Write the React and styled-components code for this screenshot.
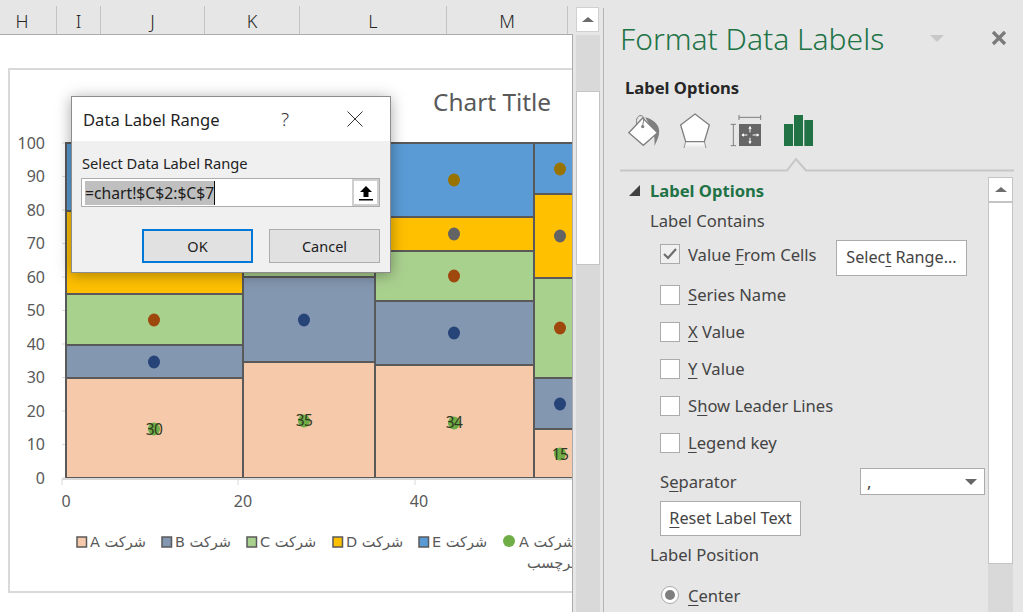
import React from "react";
import styled, { createGlobalStyle } from "styled-components";

const UI = `"Noto Sans", "Open Sans", "Liberation Sans", sans-serif`;
const ARABIC = `"DejaVu Sans", "Noto Sans", sans-serif`;

const Global = createGlobalStyle`
  html, body { margin: 0; padding: 0; background: #e6e6e6; }
  * { box-sizing: border-box; }
  u { text-decoration-thickness: 1px; text-underline-offset: 3px; }
`;

const Page = styled.div`
  display: flex;
  width: 1023px;
  height: 612px;
  overflow: hidden;
  position: relative;
  background: #e6e6e6;
  font-family: ${UI};
`;

const SheetArea = styled.div`
  width: 573px;
  flex: none;
  display: flex;
  flex-direction: column;
`;

const ColumnHeaders = styled.div`
  height: 35px;
  flex: none;
  display: flex;
  background: #e6e6e6;
  border-bottom: 1px solid #ababab;
  padding-top: 6px;
`;

const ColumnHeader = styled.div`
  width: ${(p) => p.$w}px;
  flex: none;
  display: flex;
  justify-content: center;
  align-items: center;
  font-size: 18px;
  font-weight: 300;
  padding-top: 2px;
  padding-right: ${(p) => p.$pr || 0}px;
  color: #262626;
  border-right: ${(p) => (p.$last ? "none" : "1px solid #c4c4c4")};
`;

const Sheet = styled.div`
  flex: 1;
  background: #fff;
  border-right: 1px solid #ababab;
  overflow: hidden;
  padding: 33px 0 0 8px;
`;

const ChartFrame = styled.div`
  width: 640px;
  height: 525px;
  border: 2px solid #d9d9d9;
  background: #fff;
  overflow: hidden;
`;

const ChartSvg = styled.svg`
  display: block;
`;

const AxisText = styled.text`
  font-family: ${UI};
  font-size: 16px;
  fill: #595959;
`;

const TitleText = styled.text`
  font-family: ${UI};
  font-size: 24.4px;
  fill: #595959;
`;

const DataText = styled.text`
  font-family: ${UI};
  font-size: 15.5px;
  fill: #2f3a20;
  letter-spacing: -0.5px;
`;

const LegendText = styled.text`
  font-family: ${ARABIC};
  font-size: 14.5px;
  fill: #595959;
`;

const Dialog = styled.div`
  position: absolute;
  left: 71px;
  top: 96px;
  width: 320px;
  height: 177px;
  display: flex;
  flex-direction: column;
  background: #f0f0f0;
  border: 1px solid #8c8c8c;
  box-shadow: 0 2px 14px rgba(0, 0, 0, 0.35);
`;

const DialogTitleBar = styled.div`
  height: 44px;
  flex: none;
  display: flex;
  align-items: center;
  background: #fff;
  padding-left: 11px;
  font-size: 16.6px;
  color: #1f1f1f;
`;

const DialogTitle = styled.div`
  width: 191px;
`;

const HelpMark = styled.div`
  width: 22px;
  text-align: center;
  font-size: 19px;
  font-weight: 300;
  color: #333;
`;

const DialogClose = styled.svg`
  margin-left: 51px;
`;

const DialogBody = styled.div`
  flex: 1;
  display: flex;
  flex-direction: column;
  padding: 11px 10px 0 9px;
`;

const DialogLabel = styled.div`
  height: 22px;
  line-height: 22px;
  font-size: 14.7px;
  color: #222;
  margin-left: 1px;
`;

const RangeInput = styled.div`
  height: 29px;
  margin-top: 4px;
  display: flex;
  align-items: center;
  background: #fff;
  border: 1px solid #acacac;
  padding-left: 3px;
  font-size: 15.7px;
  color: #1c1c1c;
`;

const SelectedText = styled.span`
  background: #bfbfbf;
  border-right: 1px solid #111;
  line-height: 24px;
  height: 24px;
`;

const RefButton = styled.div`
  margin-left: auto;
  width: 27px;
  height: 27px;
  background: #fff;
  border: 2px solid #cfcfcf;
  display: flex;
  align-items: center;
  justify-content: center;
`;

const DialogActions = styled.div`
  display: flex;
  justify-content: flex-end;
  gap: 16px;
  margin-top: 22px;
`;

const DialogButton = styled.div`
  width: 111px;
  height: 34px;
  display: flex;
  align-items: center;
  justify-content: center;
  background: #e1e1e1;
  border: ${(p) => (p.$primary ? "2px solid #0078d7" : "1px solid #adadad")};
  font-size: 14.5px;
  color: #1c1c1c;
`;

const VScroll = styled.div`
  width: 27px;
  flex: none;
  display: flex;
  flex-direction: column;
  padding: 7px 0 0 3px;
`;

const ScrollButton = styled.div`
  width: 23px;
  height: 25px;
  flex: none;
  background: #fff;
  border: 1px solid #d0d0d0;
  display: flex;
  align-items: center;
  justify-content: center;
`;

const ScrollTrack = styled.div`
  flex: 1;
  background: #d9d9d9;
  padding-top: ${(p) => p.$pad}px;
  margin-top: ${(p) => p.$gap}px;
`;

const ScrollThumb = styled.div`
  height: ${(p) => p.$h}px;
  background: #fff;
  border: 1px solid #c4c4c4;
`;

const Panel = styled.div`
  margin-left: 3px;
  margin-top: 8px;
  flex: 1;
  display: flex;
  flex-direction: column;
  border-left: 1px solid #b4b4b4;
  min-width: 0;
`;

const PanelHeader = styled.div`
  height: 62px;
  flex: none;
  display: flex;
  align-items: center;
  padding: 0 0 2px 16px;
`;

const PanelTitle = styled.div`
  width: 310px;
  font-size: 30px;
  font-weight: 300;
  color: #217346;
  white-space: nowrap;
`;

const PanelMenu = styled.div`
  width: 0;
  height: 0;
  border-left: 7px solid transparent;
  border-right: 7px solid transparent;
  border-top: 7px solid #c8c8c8;
`;

const PanelClose = styled.svg`
  margin-left: 47px;
`;

const TabCaption = styled.div`
  height: 24px;
  margin: 6px 0 0 21px;
  line-height: 24px;
  font-size: 16.6px;
  font-weight: 700;
  color: #262626;
`;

const TabIcons = styled.div`
  display: flex;
  align-items: center;
  height: 36px;
  margin: 12px 0 0 22px;
`;

const TabIcon = styled.svg`
  flex: none;
  margin-left: ${(p) => p.$ml || 0}px;
`;

const Divider = styled.svg`
  display: block;
  flex: none;
  margin: 9px 0 0 16px;
`;

const PanelBody = styled.div`
  flex: 1;
  display: flex;
  min-height: 0;
`;

const Options = styled.div`
  width: 384px;
  flex: none;
  display: flex;
  flex-direction: column;
  padding: 6px 3px 0 0;
  font-size: 16.6px;
  color: #444;
`;

const SectionHead = styled.div`
  height: 24px;
  flex: none;
  display: flex;
  align-items: center;
  padding-left: 25px;
  gap: 10px;
  font-size: 16.6px;
  font-weight: 700;
  color: #217346;
`;

const Caret = styled.div`
  width: 0;
  height: 0;
  border-left: 11px solid transparent;
  border-bottom: 11px solid #404040;
`;

const Caption = styled.div`
  height: 24px;
  line-height: 24px;
  margin-left: 46px;
  margin-top: ${(p) => p.$mt}px;
`;

const CheckRow = styled.div`
  display: flex;
  align-items: center;
  height: ${(p) => p.$h || 37}px;
  flex: none;
  margin-left: 56px;
  margin-top: ${(p) => p.$mt || 0}px;
  margin-bottom: ${(p) => p.$mb || 0}px;
  gap: 8px;
`;

const CheckBox = styled.div`
  width: 20px;
  height: 20px;
  flex: none;
  display: flex;
  align-items: center;
  justify-content: center;
  background: ${(p) => (p.$on ? "#f0f0f0" : "#fff")};
  border: 1px solid #ababab;
`;

const RadioBox = styled.div`
  width: 18px;
  height: 18px;
  margin: 0 1px;
  flex: none;
  border-radius: 50%;
  border: 1px solid #ababab;
  background: #fff;
  display: flex;
  align-items: center;
  justify-content: center;
  &::after {
    content: "";
    width: 10px;
    height: 10px;
    border-radius: 50%;
    background: #7f7f7f;
  }
`;

const FlatButton = styled.div`
  height: ${(p) => p.$h}px;
  width: ${(p) => p.$w}px;
  flex: none;
  display: flex;
  align-items: center;
  justify-content: center;
  background: #fff;
  border: 1px solid #ababab;
  color: #444;
  font-size: 16.2px;
  padding-bottom: 2px;
`;

const RangeButtonSlot = styled.div`
  margin-left: auto;
  margin-top: 8px;
  margin-right: 18px;
`;

const SeparatorRow = styled.div`
  display: flex;
  align-items: center;
  flex: none;
  height: 27px;
  margin: 7px 0 0 56px;
`;

const SelectBox = styled.div`
  margin-left: auto;
  width: 125px;
  height: 27px;
  display: flex;
  align-items: center;
  justify-content: space-between;
  background: #fff;
  border: 1px solid #ababab;
  padding: 0 7px 0 6px;
`;

const SelectCaret = styled.div`
  width: 0;
  height: 0;
  border-left: 6px solid transparent;
  border-right: 6px solid transparent;
  border-top: 6px solid #666;
`;

const ResetSlot = styled.div`
  margin: 6px 0 0 56px;
`;

const PanelScroll = styled.div`
  width: 25px;
  flex: none;
  display: flex;
  flex-direction: column;
  padding-top: 5px;
`;

const PanelScrollButton = styled.div`
  height: 25px;
  flex: none;
  background: #fff;
  border: 1px solid #c4c4c4;
  display: flex;
  align-items: center;
  justify-content: center;
`;

const PanelTrack = styled.div`
  flex: 1;
  background: #d9d9d9;
`;

const UpArrow = styled.div`
  width: 0;
  height: 0;
  border-left: 6px solid transparent;
  border-right: 6px solid transparent;
  border-bottom: 5px solid #6d6d6d;
`;

/* ---------- chart data, in page pixels ---------- */
const PAL = { A: "#f7c9ab", B: "#8497b0", C: "#a9d18e", D: "#ffc000", E: "#5b9bd5" };

const bars = [
  { x: 66, w: 177, y: [478, 378, 345, 294, 211, 143] },
  { x: 243, w: 132, y: [478, 362, 277, 250, 217, 143] },
  { x: 375, w: 159, y: [478, 365, 301, 251, 217, 143] },
  { x: 534, w: 80, y: [478, 429, 378, 278, 194, 143] },
];

const dots = [
  [154, 429, "#70ad47"], [154, 362, "#264478"], [154, 320, "#9e480e"],
  [304, 421, "#70ad47"], [304, 320, "#264478"],
  [454, 423, "#70ad47"], [454, 333, "#264478"], [454, 276, "#9e480e"], [454, 234, "#636363"], [454, 180, "#997300"],
  [560, 454, "#70ad47"], [560, 404, "#264478"], [560, 328, "#9e480e"], [560, 236, "#636363"], [560, 169, "#997300"],
];

const labels = [[154, 435, "30"], [304, 426, "35"], [454, 428, "34"], [560, 460, "15"]];
const series = ["A", "B", "C", "D", "E"];
const legend = [[77, "A"], [162, "B"], [247, "C"], [333, "D"], [419, "E"]];
const yTicks = [0, 10, 20, 30, 40, 50, 60, 70, 80, 90, 100];

function Chart() {
  return (
    <ChartSvg width="636" height="521" viewBox="10 70 636 521">
      <TitleText x="433" y="111">Chart Title</TitleText>
      {yTicks.map((v) => {
        const y = 478 - v * 3.35;
        return (
          <g key={v}>
            <line x1="62" x2="66" y1={y} y2={y} stroke="#d9d9d9" />
            <AxisText x="45" y={y + 5.5} textAnchor="end">{v}</AxisText>
          </g>
        );
      })}
      {bars.map((b) =>
        series.map((s, i) => (
          <rect key={b.x + s} x={b.x} width={b.w} y={b.y[i + 1]} height={b.y[i] - b.y[i + 1]}
            fill={PAL[s]} stroke="#595959" strokeWidth="2" />
        ))
      )}
      <line x1="62" x2="640" y1="479" y2="479" stroke="#d9d9d9" strokeWidth="2" />
      {[62, 238, 415, 592].map((x) => (
        <line key={x} x1={x} x2={x} y1="479" y2="485" stroke="#d9d9d9" />
      ))}
      {[[66, "0"], [243, "20"], [419, "40"]].map(([x, t]) => (
        <AxisText key={t} x={x} y="507" textAnchor="middle">{t}</AxisText>
      ))}
      {dots.map(([x, y, c]) => (
        <ellipse key={x + "-" + y} cx={x} cy={y} rx="6" ry="6.5" fill={c} />
      ))}
      {labels.map(([x, y, t]) => (
        <DataText key={t} x={x} y={y} textAnchor="middle">{t}</DataText>
      ))}
      {legend.map(([x, s]) => (
        <g key={s}>
          <rect x={x} y="537" width="9.5" height="10" fill={PAL[s]} stroke="#595959" strokeWidth="1.5" />
          <LegendText x={x + 13} y="547">{s} شرکت</LegendText>
        </g>
      ))}
      <circle cx="509" cy="541" r="6" fill="#70ad47" />
      <LegendText x="519" y="547">A شرکت</LegendText>
      <LegendText x="527" y="568">برچسب</LegendText>
    </ChartSvg>
  );
}

const columns = [
  ["H", 57, 12], ["I", 44], ["J", 104], ["K", 95], ["L", 147], ["M", 121], ["", 5],
];

const checks = [
  [<><u>S</u>eries Name</>],
  [<><u>X</u> Value</>],
  [<><u>Y</u> Value</>],
  [<>S<u>h</u>ow Leader Lines</>],
  [<><u>L</u>egend key</>],
];

export default function App() {
  return (
    <>
      <Global />
      <Page>
        <SheetArea>
          <ColumnHeaders>
            {columns.map(([name, w, pr], i) => (
              <ColumnHeader key={i} $w={w} $pr={pr} $last={i === columns.length - 1}>{name}</ColumnHeader>
            ))}
          </ColumnHeaders>
          <Sheet>
            <ChartFrame>
              <Chart />
            </ChartFrame>
          </Sheet>
        </SheetArea>

        <VScroll>
          <ScrollButton><UpArrow /></ScrollButton>
          <ScrollTrack $gap={3} $pad={56}>
            <ScrollThumb $h={174} />
          </ScrollTrack>
        </VScroll>

        <Panel>
          <PanelHeader>
            <PanelTitle>Format Data Labels</PanelTitle>
            <PanelMenu />
            <PanelClose width="16" height="16" viewBox="0 0 16 16">
              <path d="M2 2 14 14M14 2 2 14" stroke="#7a7a7a" strokeWidth="3.2" fill="none" />
            </PanelClose>
          </PanelHeader>
          <TabCaption>Label Options</TabCaption>
          <TabIcons>
            <TabIcon width="35" height="33" viewBox="30 40 105 100">
              <path d="M88 50C108 55 130 70 130 92 130 110 122 122 116 137 116 120 116 105 112 95Z" fill="#7f7f7f" />
              <polygon points="38,97 80,52 125,97 82,135" fill="#fff" stroke="#7f7f7f" strokeWidth="4" />
              <path d="M62 72C56 44 78 38 84 52L80 76" fill="none" stroke="#7f7f7f" strokeWidth="3" />
              <circle cx="80" cy="78" r="5" fill="#7f7f7f" />
            </TabIcon>
            <TabIcon $ml={18} width="32" height="36" viewBox="192 36 96 108">
              <defs>
                <linearGradient id="fade" x1="0" x2="0" y1="0" y2="1">
                  <stop offset="0" stopColor="#fff" />
                  <stop offset="1" stopColor="#fff" stopOpacity="0" />
                </linearGradient>
              </defs>
              <polygon points="212,127 268,127 274,144 206,144" fill="url(#fade)" />
              <path d="M212 125 207 144M268 125 273 144" stroke="#7f7f7f" strokeWidth="3" fill="none" opacity="0.8" />
              <polygon points="240,42 283,75 268,125 212,125 197,75" fill="#fff" stroke="#7f7f7f" strokeWidth="4" />
            </TabIcon>
            <TabIcon $ml={19} width="33" height="33" viewBox="348 42 99 99">
              <path d="M375 52H440M375 45V60M440 45V60M358 73V137M350 73H366M350 137H366" stroke="#7f7f7f" strokeWidth="3" fill="none" />
              <rect x="375" y="72" width="66" height="66" fill="#666" />
              <path d="M384 105H400M416 105H434M408 80V97M408 113V130" stroke="#fff" strokeWidth="3" fill="none" />
              <path d="M382 105 390 100V110ZM436 105 428 100V110ZM408 78 403 86H413ZM408 132 403 124H413Z" fill="#fff" />
            </TabIcon>
            <TabIcon $ml={21} width="29" height="31" viewBox="507 45 87 93">
              <rect x="507" y="72" width="27" height="66" fill="#217346" />
              <rect x="537" y="45" width="27" height="93" fill="#217346" />
              <rect x="568" y="60" width="26" height="78" fill="#217346" />
            </TabIcon>
          </TabIcons>
          <Divider width="394" height="15" viewBox="0 0 394 15">
            <polyline points="0,13.5 167,13.5 176,2 186,13.5 394,13.5" fill="none" stroke="#c6c6c6" strokeWidth="2" />
          </Divider>
          <PanelBody>
            <Options>
              <SectionHead><Caret />Label Options</SectionHead>
              <Caption $mt={7}>Label Contains</Caption>
              <CheckRow $h={36} $mt={3} $mb={4}>
                <CheckBox $on>
                  <svg width="14" height="12" viewBox="0 0 14 12">
                    <path d="M1 6 5 10 13 1" fill="none" stroke="#6e6e6e" strokeWidth="2.2" />
                  </svg>
                </CheckBox>
                <span>Value <u>F</u>rom Cells</span>
                <RangeButtonSlot>
                  <FlatButton $w={131} $h={36}><span>Selec<u>t</u> Range...</span></FlatButton>
                </RangeButtonSlot>
              </CheckRow>
              {checks.map(([t], i) => (
                <CheckRow key={i}>
                  <CheckBox />
                  <span>{t}</span>
                </CheckRow>
              ))}
              <SeparatorRow>
                <span>S<u>e</u>parator</span>
                <SelectBox>
                  <span>,</span>
                  <SelectCaret />
                </SelectBox>
              </SeparatorRow>
              <ResetSlot>
                <FlatButton $w={141} $h={35}><span><u>R</u>eset Label Text</span></FlatButton>
              </ResetSlot>
              <Caption $mt={7}>Label Position</Caption>
              <CheckRow $h={24} $mt={16}>
                <RadioBox />
                <span><u>C</u>enter</span>
              </CheckRow>
            </Options>
            <PanelScroll>
              <PanelScrollButton><UpArrow /></PanelScrollButton>
              <ScrollThumb $h={362} />
              <PanelTrack />
            </PanelScroll>
          </PanelBody>
        </Panel>

        <Dialog>
          <DialogTitleBar>
            <DialogTitle>Data Label Range</DialogTitle>
            <HelpMark>?</HelpMark>
            <DialogClose width="16" height="16" viewBox="0 0 16 16">
              <path d="M.5.5 15.5 15.5M15.5.5 .5 15.5" stroke="#333" strokeWidth="1" fill="none" />
            </DialogClose>
          </DialogTitleBar>
          <DialogBody>
            <DialogLabel>Select Data Label Range</DialogLabel>
            <RangeInput>
              <SelectedText>=chart!$C$2:$C$7</SelectedText>
              <RefButton>
                <svg width="14" height="16" viewBox="0 0 14 16">
                  <path d="M7 1 13 7H9.5V12H4.5V7H1Z" fill="#000" />
                  <rect x="0" y="14" width="14" height="1.5" fill="#000" />
                </svg>
              </RefButton>
            </RangeInput>
            <DialogActions>
              <DialogButton $primary>OK</DialogButton>
              <DialogButton>Cancel</DialogButton>
            </DialogActions>
          </DialogBody>
        </Dialog>
      </Page>
    </>
  );
}
